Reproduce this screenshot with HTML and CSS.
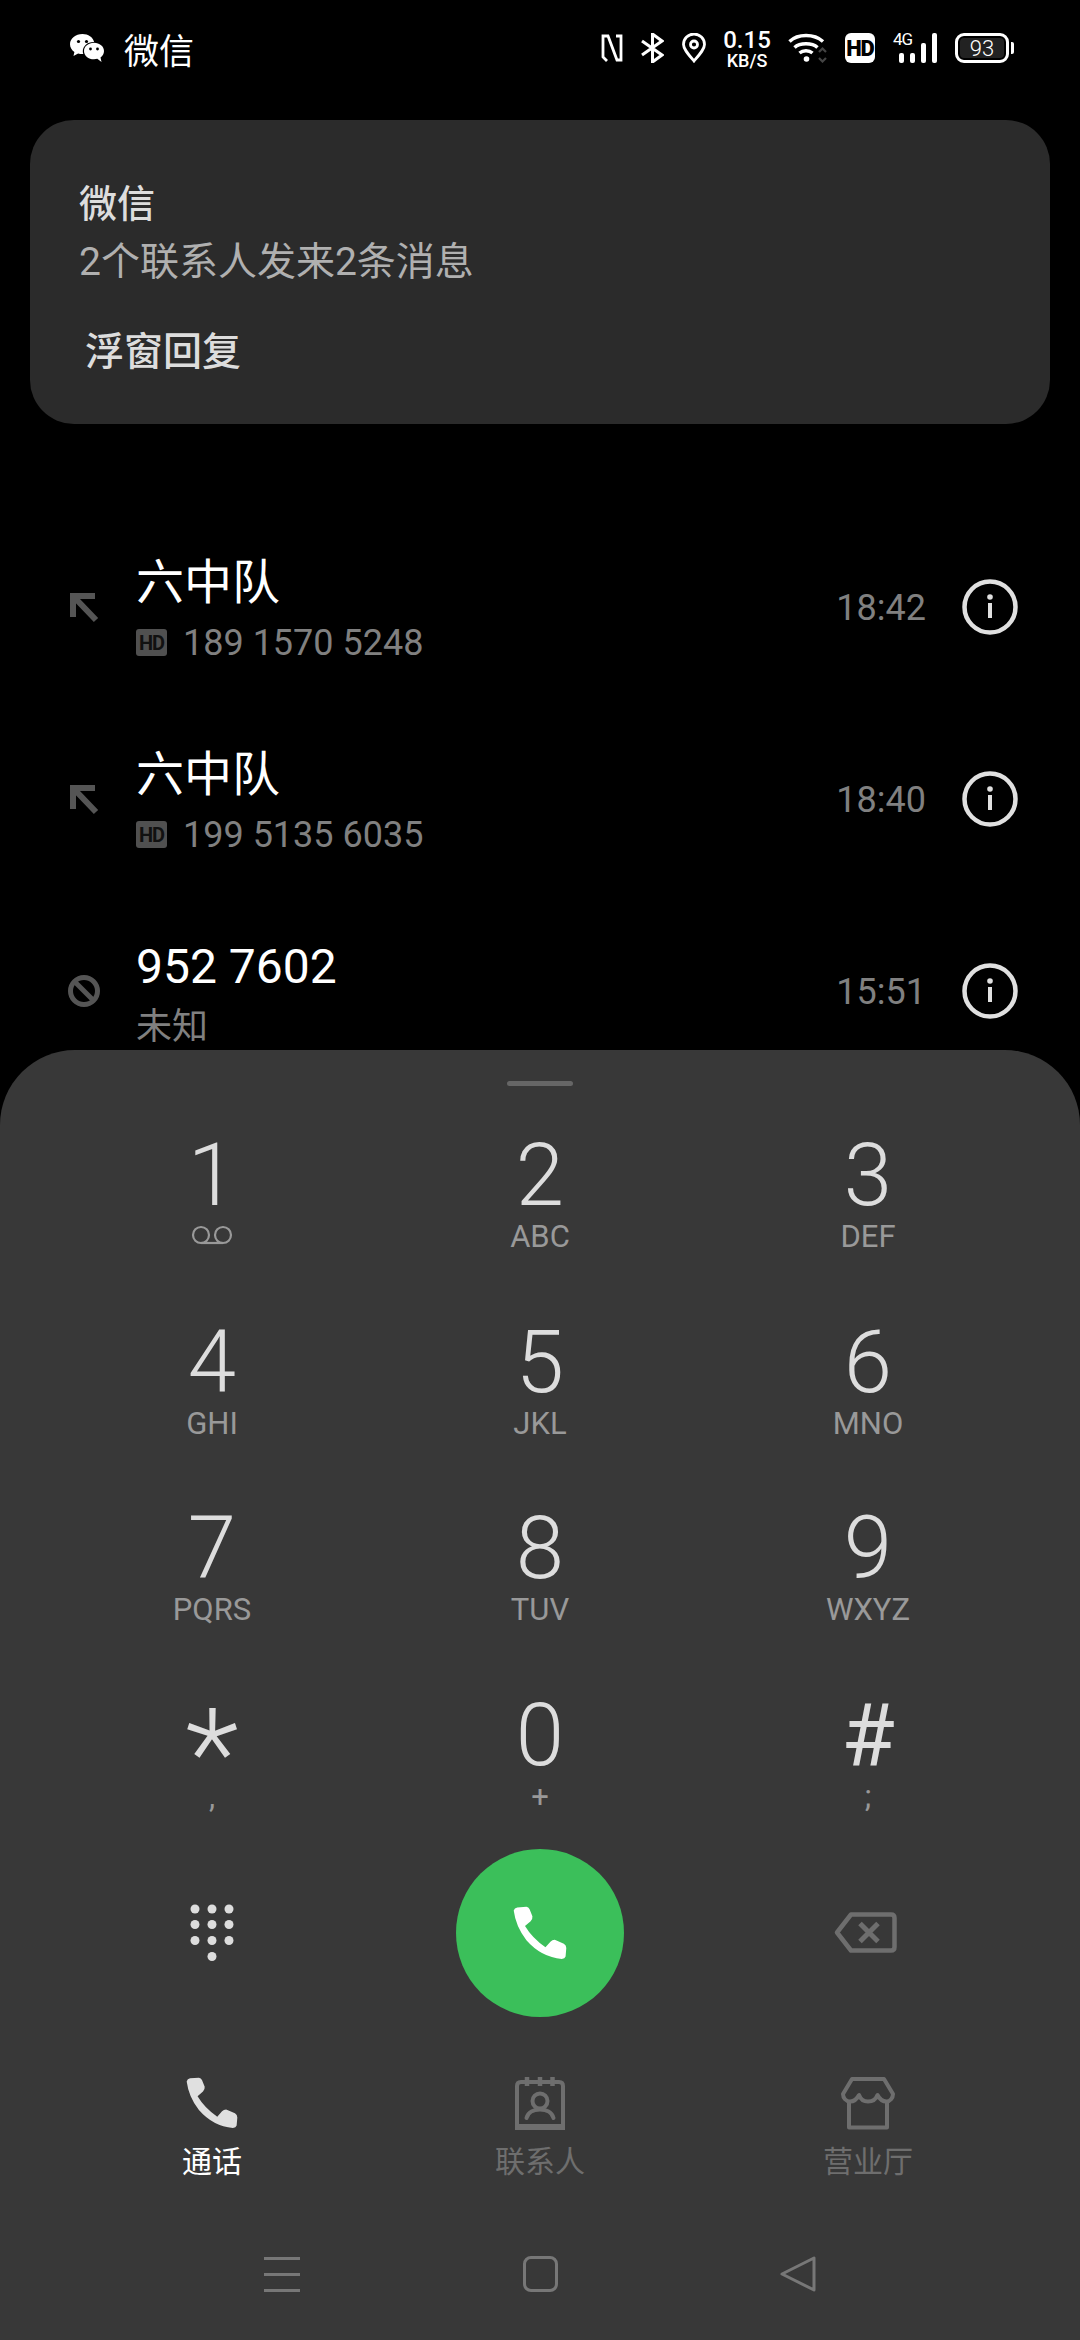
FILE: index.html
```html
<!DOCTYPE html>
<html lang="zh-CN">
<head>
    <meta charset="UTF-8">
    <meta name="viewport" content="width=device-width, initial-scale=1.0">
    <title>拨号</title>
    <link rel="stylesheet" href="styles.css">
</head>
<body>

<div class="phone">

    <div class="status-bar">
        <div class="status-left">
            <svg class="wechat-icon" viewBox="0 0 34 29" width="34" height="29">
                <path fill="#fff" d="M12.500 0C5.600 0 0 4.500 0 10.200c0 3.100 1.700 5.800 4.400 7.700L3.500 22l4.600-2.500c1.400.4 2.900.6 4.400.6h.8c-.3-.9-.5-1.900-.5-2.900 0-5 4.600-9.300 10.500-9.300h.8C23 3.100 18.200 0 12.500 0z"/>
                <path fill="#fff" d="M34 17c0-4.700-4.400-8.300-10-8.300S14 12.300 14 17s4.400 8.300 10 8.300c1.200 0 2.300-.2 3.300-.5l4.200 3.200-1-4.500c2.100-1.500 3.500-3.800 3.500-6.500z"/>
                <circle cx="8.500" cy="7.500" r="1.600" fill="#000"/><circle cx="16.500" cy="7.500" r="1.600" fill="#000"/>
                <circle cx="20.500" cy="15" r="1.400" fill="#000"/><circle cx="27.500" cy="15" r="1.400" fill="#000"/>
            </svg>
            <span class="status-app">微信</span>
        </div>
        <div class="status-right">
            <svg viewBox="0 0 22 30" width="22" height="30" fill="none" stroke="#fff" stroke-width="2.800">
                <path d="M6 28 2 24V3h5l9 24h4V3h-5"/>
            </svg>
            <svg viewBox="0 0 23 30" width="23" height="30" fill="none" stroke="#fff" stroke-width="3">
                <path d="M1 8 21 22 11.500 29V1L21 8 1 22"/>
            </svg>
            <svg viewBox="0 0 24 30" width="24" height="30" fill="none" stroke="#fff" stroke-width="2.800">
                <path d="M12 28C6 21 1.500 16 1.500 11.500a10.500 10.500 0 0 1 21 0C22.500 16 18 21 12 28z"/><circle cx="12" cy="11.500" r="3.500"/>
            </svg>
            <div class="net-speed"><span class="net-value">0.15</span><span class="net-unit">KB/S</span></div>
            <svg viewBox="0 0 39 30" width="39" height="30" fill="none" stroke="#fff" stroke-width="3.500">
                <path d="M1.500 8.500C10 .5 26 .5 35 8.500M6.500 14.500C12 9.500 24 9.500 29.500 14.500M11.500 20C15 17 21 17 24.500 20"/>
                <circle cx="18.500" cy="26" r="2.800" fill="#fff" stroke="none"/>
                <path stroke="#444" stroke-width="2.200" d="M31 19l3.500-3.500L38 19M31 25l3.500 3.500L38 25"/>
            </svg>
            <span class="hd-badge">HD</span>
            <div class="signal">
                <span class="signal-label">4G</span>
                <span class="bar bar-1"></span><span class="bar bar-2"></span><span class="bar bar-3"></span><span class="bar bar-4"></span>
            </div>
            <div class="battery"><span class="battery-body">93</span><span class="battery-cap"></span></div>
        </div>
    </div>

    <div class="notice-card">
        <div class="notice-title">微信</div>
        <div class="notice-text">2个联系人发来2条消息</div>
        <div class="notice-action">浮窗回复</div>
    </div>

    <div class="call-list">
        <div class="call-row">
            <svg class="call-type" viewBox="0 0 32 32" width="32" height="32" fill="none" stroke="#555" stroke-width="6">
                <path d="M27 5H5V26M6 6 28 29"/>
            </svg>
            <div class="call-info">
                <div class="call-name">六中队</div>
                <div class="call-sub"><span class="hd-mini">HD</span>189 1570 5248</div>
            </div>
            <div class="call-time">18:42</div>
            <svg class="info-icon" viewBox="0 0 56 56" width="56" height="56">
                <circle cx="28" cy="28" r="25.500" fill="none" stroke="#e0e0e0" stroke-width="4.500"/>
                <circle cx="28" cy="18" r="2.800" fill="#e0e0e0"/><rect x="26" y="24" width="4" height="15" fill="#e0e0e0"/>
            </svg>
        </div>
        <div class="call-row">
            <svg class="call-type" viewBox="0 0 32 32" width="32" height="32" fill="none" stroke="#555" stroke-width="6">
                <path d="M27 5H5V26M6 6 28 29"/>
            </svg>
            <div class="call-info">
                <div class="call-name">六中队</div>
                <div class="call-sub"><span class="hd-mini">HD</span>199 5135 6035</div>
            </div>
            <div class="call-time">18:40</div>
            <svg class="info-icon" viewBox="0 0 56 56" width="56" height="56">
                <circle cx="28" cy="28" r="25.500" fill="none" stroke="#e0e0e0" stroke-width="4.500"/>
                <circle cx="28" cy="18" r="2.800" fill="#e0e0e0"/><rect x="26" y="24" width="4" height="15" fill="#e0e0e0"/>
            </svg>
        </div>
        <div class="call-row">
            <svg class="call-type" viewBox="0 0 32 32" width="32" height="32" fill="none" stroke="#555" stroke-width="5">
                <circle cx="16" cy="16" r="13.500"/><path d="M6.500 6.500l19 19"/>
            </svg>
            <div class="call-info">
                <div class="call-name">952 7602</div>
                <div class="call-sub">未知</div>
            </div>
            <div class="call-time">15:51</div>
            <svg class="info-icon" viewBox="0 0 56 56" width="56" height="56">
                <circle cx="28" cy="28" r="25.500" fill="none" stroke="#e0e0e0" stroke-width="4.500"/>
                <circle cx="28" cy="18" r="2.800" fill="#e0e0e0"/><rect x="26" y="24" width="4" height="15" fill="#e0e0e0"/>
            </svg>
        </div>
    </div>

    <div class="sheet">
        <div class="sheet-handle"></div>

        <div class="keypad">
            <div class="key"><div class="key-digit">1</div><div class="key-sub">
                <svg class="voicemail" viewBox="0 0 42 20" width="42" height="20" fill="none" stroke="#999" stroke-width="2.200"><circle cx="10" cy="10" r="8"/><circle cx="32" cy="10" r="8"/><path d="M10 18h22"/></svg>
            </div></div>
            <div class="key"><div class="key-digit">2</div><div class="key-sub">ABC</div></div>
            <div class="key"><div class="key-digit">3</div><div class="key-sub">DEF</div></div>
            <div class="key"><div class="key-digit">4</div><div class="key-sub">GHI</div></div>
            <div class="key"><div class="key-digit">5</div><div class="key-sub">JKL</div></div>
            <div class="key"><div class="key-digit">6</div><div class="key-sub">MNO</div></div>
            <div class="key"><div class="key-digit">7</div><div class="key-sub">PQRS</div></div>
            <div class="key"><div class="key-digit">8</div><div class="key-sub">TUV</div></div>
            <div class="key"><div class="key-digit">9</div><div class="key-sub">WXYZ</div></div>
            <div class="key"><div class="key-digit key-star">*</div><div class="key-sub">,</div></div>
            <div class="key"><div class="key-digit">0</div><div class="key-sub">+</div></div>
            <div class="key"><div class="key-digit key-hash">#</div><div class="key-sub">;</div></div>
        </div>

        <div class="action-row">
            <div class="action-cell">
                <svg viewBox="0 0 44 58" width="44" height="58" fill="#ddd">
                    <circle cx="5" cy="5" r="4.500"/><circle cx="22" cy="5" r="4.500"/><circle cx="39" cy="5" r="4.500"/>
                    <circle cx="5" cy="20.500" r="4.500"/><circle cx="22" cy="20.500" r="4.500"/><circle cx="39" cy="20.500" r="4.500"/>
                    <circle cx="5" cy="36.500" r="4.500"/><circle cx="22" cy="36.500" r="4.500"/><circle cx="39" cy="36.500" r="4.500"/>
                    <circle cx="22" cy="52.500" r="4.500"/>
                </svg>
            </div>
            <div class="action-cell">
                <div class="call-button">
                    <svg viewBox="80 53 153 153" width="54" height="54" fill="#fff">
                        <path d="M82 66Q84 58 92 57L118 55Q124 56 127 62L135 82Q136 90 130 96L114 110Q135 145 172 170L186 154Q192 148 200 149L224 160Q231 164 231 172L229 196Q227 203 218 203Q160 198 118 150Q88 112 82 66Z"/>
                    </svg>
                </div>
            </div>
            <div class="action-cell">
                <svg class="backspace" viewBox="0 0 63 42" width="63" height="42" fill="none" stroke="#6e6e6e" stroke-width="4.500" stroke-linejoin="round">
                    <path d="M3 20.500 17 2.500H57Q60.500 2.500 60.500 6V35Q60.500 38.500 57 38.500H17z"/><path d="M26 11.500 44 29.500M44 11.500 26 29.500" stroke-width="5"/>
                </svg>
            </div>
        </div>

        <div class="tab-bar">
            <div class="tab tab-active">
                <svg viewBox="80 53 153 153" width="52" height="54" fill="#e0e0e0">
                    <path d="M82 66Q84 58 92 57L118 55Q124 56 127 62L135 82Q136 90 130 96L114 110Q135 145 172 170L186 154Q192 148 200 149L224 160Q231 164 231 172L229 196Q227 203 218 203Q160 198 118 150Q88 112 82 66Z"/>
                </svg>
                <span>通话</span>
            </div>
            <div class="tab">
                <svg viewBox="0 0 50 54" width="50" height="54" fill="none" stroke="#6e6e6e" stroke-width="4">
                    <path d="M2 52V10Q2 6 6 6H44Q48 6 48 10V52Z"/><path d="M2 50.500H48" stroke-width="5"/>
                    <path d="M12 1V10M25 1V10M37.500 1V10" stroke-width="4.500"/>
                    <circle cx="25" cy="25" r="7.500"/><path d="M11.500 42C13 36 19 33.500 25 33.500S37 36 38.500 42" stroke-linecap="round"/>
                </svg>
                <span>联系人</span>
            </div>
            <div class="tab">
                <svg viewBox="0 0 54 54" width="54" height="54" fill="none" stroke="#6e6e6e" stroke-width="4" stroke-linejoin="round">
                    <path d="M11 3H43L52 18C52 22 49 25.500 45.500 25.500S38.500 23 36.500 19C35 23 31.500 25.500 27 25.500S19.500 23 18 19C16 23 13 25.500 9 25.500S2 22 2 18Z"/>
                    <path d="M8 26V51.500H46V26"/>
                </svg>
                <span>营业厅</span>
            </div>
        </div>

        <div class="nav-bar">
            <div class="nav-menu"><span></span><span></span><span></span></div>
            <div class="nav-home"></div>
            <svg viewBox="0 0 36 36" width="36" height="36" fill="none" stroke="#777" stroke-width="3" stroke-linejoin="round">
                <path d="M34 2v32L2 18z"/>
            </svg>
        </div>
    </div>
</div>

</body>
</html>
```

FILE: styles.css
```css
* {
    box-sizing: border-box;
}

body {
    margin: 0;
    background: #000;
    font-family: Roboto, "Noto Sans CJK SC", sans-serif;
    color: #fff;
}

.phone {
    position: relative;
    display: flex;
    flex-direction: column;
    width: 1080px;
    height: 2340px;
    overflow: hidden;
    background: #000;
}

.status-bar {
    display: flex;
    justify-content: space-between;
    align-items: center;
    height: 96px;
    padding: 0 66px 0 70px;
}

.status-left {
    display: flex;
    align-items: center;
    gap: 20px;
}

.status-app {
    font-size: 35px;
}

.status-right {
    display: flex;
    align-items: center;
    gap: 18px;
}

.net-speed {
    display: flex;
    flex-direction: column;
    align-items: center;
    width: 46px;
    font-weight: 500;
}

.net-value {
    font-size: 24px;
    line-height: 22px;
}

.net-unit {
    margin-top: 2px;
    font-size: 18px;
    line-height: 15px;
}

.hd-badge {
    display: flex;
    align-items: center;
    justify-content: center;
    width: 30px;
    height: 30px;
    border-radius: 6px;
    background: #fff;
    color: #000;
    font-size: 22px;
    font-weight: 900;
    letter-spacing: -1px;
}

.signal {
    position: relative;
    display: flex;
    align-items: flex-end;
    gap: 6px;
    height: 30px;
    padding-left: 6px;
}

.signal-label {
    position: absolute;
    left: 0;
    top: -1px;
    font-size: 17px;
    line-height: 15px;
    letter-spacing: -1px;
}

.bar {
    width: 5px;
    border-radius: 2px;
    background: #fff;
}

.bar-1 { height: 10px; }
.bar-2 { height: 10px; }
.bar-3 { height: 20px; }
.bar-4 { height: 30px; }

.battery {
    display: flex;
    align-items: center;
    gap: 2px;
}

.battery-body {
    display: flex;
    align-items: center;
    justify-content: center;
    width: 54px;
    height: 30px;
    border: 3px solid #fff;
    border-radius: 9px;
    background: #222;
    box-shadow: inset 0 0 0 2px #000;
    font-size: 22px;
    font-weight: 300;
}

.battery-cap {
    width: 3px;
    height: 12px;
    border-radius: 0 2px 2px 0;
    background: #fff;
}

.notice-card {
    margin: 24px 30px 0;
    height: 304px;
    padding: 59px 49px 0;
    border-radius: 44px;
    background: #2b2b2b;
}

.notice-title {
    font-size: 38px;
    line-height: 50px;
    font-weight: 500;
    color: #ddd;
}

.notice-text {
    margin-top: 8px;
    font-size: 39px;
    line-height: 50px;
    color: #b0b0b0;
}

.notice-action {
    margin: 40px 0 0 6px;
    font-size: 39px;
    line-height: 50px;
    font-weight: 500;
    color: #ddd;
}

.call-list {
    margin-top: 87px;
}

.call-row {
    display: flex;
    align-items: center;
    height: 192px;
    padding: 0 62px 0 68px;
}

.call-type {
    flex: none;
    margin-right: 36px;
}

.call-info {
    flex: 1;
    padding-top: 6px;
}

.call-name {
    font-size: 48px;
    line-height: 64px;
}

.call-sub {
    display: flex;
    align-items: center;
    margin-top: 1px;
    font-size: 36px;
    line-height: 54px;
    color: #808080;
}

.hd-mini {
    display: flex;
    align-items: center;
    justify-content: center;
    width: 31px;
    height: 27px;
    margin-right: 16px;
    border-radius: 3px;
    background: #505050;
    color: #111;
    font-size: 20px;
    font-weight: 700;
    letter-spacing: -1px;
}

.call-time {
    margin-right: 36px;
    padding-top: 2px;
    font-size: 36px;
    color: #808080;
}

.info-icon {
    flex: none;
}

.sheet {
    position: absolute;
    left: 0;
    top: 1050px;
    width: 1080px;
    height: 1290px;
    padding-top: 31px;
    border-radius: 75px 75px 0 0;
    background: #383838;
}

.sheet-handle {
    width: 66px;
    height: 5px;
    margin: 0 auto;
    border-radius: 3px;
    background: #666;
}

.keypad {
    display: grid;
    grid-template-columns: repeat(3, 328px);
    grid-template-rows: repeat(3, 186.500px) 158.500px;
    padding: 45px 48px 0;
}

.key {
    display: flex;
    flex-direction: column;
    align-items: center;
}

.key-digit {
    height: 88px;
    font-size: 87px;
    line-height: 88px;
    font-weight: 300;
    color: #ddd;
}

.key-star {
    font-size: 125px;
    line-height: 128px;
}

.key-hash {
    font-weight: 400;
}

.key-sub {
    display: flex;
    align-items: center;
    justify-content: center;
    height: 36px;
    font-size: 31px;
    line-height: 36px;
    color: #999;
}

.voicemail {
    margin-bottom: 4px;
}

.action-row {
    display: grid;
    grid-template-columns: repeat(3, 328px);
    padding: 0 48px;
}

.action-cell {
    display: flex;
    align-items: center;
    justify-content: center;
    height: 168px;
}

.backspace {
    margin-right: 5px;
}

.call-button {
    display: flex;
    align-items: center;
    justify-content: center;
    width: 168px;
    height: 168px;
    border-radius: 50%;
    background: #3bbf5a;
}

.tab-bar {
    display: grid;
    grid-template-columns: repeat(3, 328px);
    padding: 0 48px;
    margin-top: 59px;
}

.tab {
    display: flex;
    flex-direction: column;
    align-items: center;
    gap: 12px;
    font-size: 30px;
    line-height: 40px;
    color: #6e6e6e;
}

.tab-active {
    color: #fff;
}

.nav-bar {
    display: grid;
    grid-template-columns: repeat(3, 258px);
    justify-content: center;
    justify-items: center;
    align-items: center;
    margin-top: 74px;
}

.nav-menu {
    display: flex;
    flex-direction: column;
    gap: 13px;
    width: 36px;
}

.nav-menu span {
    height: 3px;
    background: #777;
}

.nav-home {
    width: 35px;
    height: 36px;
    border: 3px solid #777;
    border-radius: 8px;
}
```
